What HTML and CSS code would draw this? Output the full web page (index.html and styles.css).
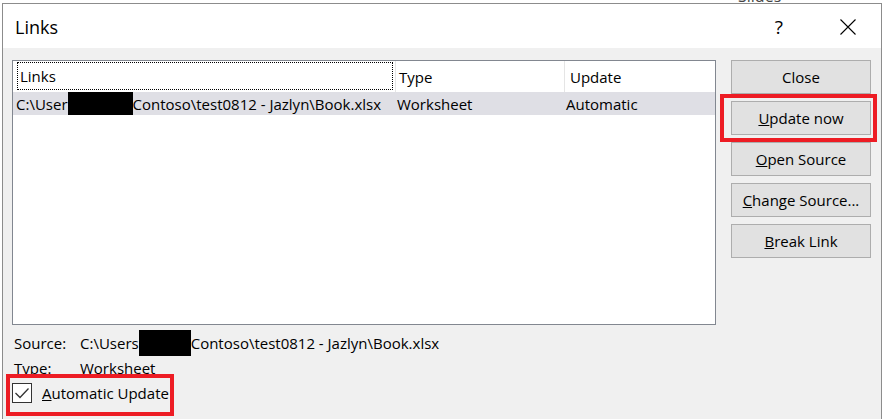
FILE: index.html
```html
<!DOCTYPE html>
<html>
<head>
<meta charset="utf-8">
<link rel="stylesheet" href="styles.css">
</head>
<body>
<div class="screen">
  <div class="behind">Slides</div>
  <div class="dialog">
    <div class="titlebar">
      <span class="title">Links</span>
      <span class="help">?</span>
      <svg class="close" width="16" height="16" viewBox="0 0 16 16"><path d="M0.5 0.5 L15.5 15.5 M15.5 0.5 L0.5 15.5" stroke="#000" stroke-width="1.1" fill="none"/></svg>
    </div>
    <div class="body">
      <div class="left">
        <div class="listbox">
          <div class="hdr">
            <div class="col c1"><span class="focus">Links</span></div>
            <div class="col c2">Type</div>
            <div class="col c3">Update</div>
          </div>
          <div class="row sel">
            <div class="cell c1">C:\User<span class="redact r1"></span>Contoso\test0812 - Jazlyn\Book.xlsx</div>
            <div class="cell c2">Worksheet</div>
            <div class="cell c3">Automatic</div>
          </div>
        </div>
        <div class="info">
          <div class="line"><span class="lbl">Source:</span><span class="val">C:\Users<span class="redact r2"></span>Contoso\test0812 - Jazlyn\Book.xlsx</span></div>
          <div class="line"><span class="lbl">Type:</span><span class="val">Worksheet</span></div>
        </div>
        <div class="auto highlight-auto">
          <span class="check"><svg width="18" height="18" viewBox="0 0 18 18"><path d="M2.5 9 L7 13.5 L15.5 4.5" stroke="#333" stroke-width="1.3" fill="none"/></svg></span>
          <span class="auto-text"><u>A</u>utomatic Update</span>
        </div>
      </div>
      <div class="buttons">
        <button class="btn">Close</button>
        <button class="btn highlight-btn"><u>U</u>pdate now</button>
        <button class="btn"><u>O</u>pen Source</button>
        <button class="btn"><u>C</u>hange Source...</button>
        <button class="btn"><u>B</u>reak Link</button>
      </div>
    </div>
  </div>
</div>
</body>
</html>
```
FILE: styles.css
```css
*, *::before, *::after { box-sizing: border-box; }
html, body { margin: 0; padding: 0; }
body {
  background: #fff;
  font-family: "Open Sans", "Noto Sans", sans-serif;
  font-size: 15px;
  color: #000;
  width: 884px;
  height: 419px;
  overflow: hidden;
}
.screen {
  position: relative;
  height: 419px;
  padding: 3px 2px 0 2px;
  overflow: hidden;
}
.behind {
  position: absolute;
  left: 738px;
  top: -15px;
  font-size: 16px;
  color: #444;
}
.dialog {
  position: relative;
  width: 880px;
  height: 420px;
  border: 1px solid #8c8c8c;
  border-bottom: none;
  background: #f0f0f0;
}
.titlebar {
  height: 44px;
  background: #fff;
  display: flex;
  align-items: center;
  padding: 0 25px 0 12px;
}
.title {
  font-size: 18px;
  line-height: 24px;
  margin-top: 1px;
}
.help {
  margin-left: auto;
  font-size: 19px;
  line-height: 24px;
  margin-right: 57px;
  margin-top: 1px;
}
.close { display: block; margin-top: 2px; }
.body {
  display: flex;
  gap: 15px;
  padding: 12px 10px 0 9px;
}
.left {
  width: 704px;
  display: flex;
  flex-direction: column;
  align-items: flex-start;
}
.listbox {
  width: 704px;
  height: 265px;
  border: 1px solid #828790;
  background: #fff;
}
.hdr {
  display: flex;
  height: 31px;
}
.hdr .col {
  height: 31px;
  display: flex;
  align-items: center;
  border-right: 1px solid #e5e5e5;
}
.hdr .c1 { width: 383px; padding-left: 4px; }
.hdr .c2 { width: 169px; padding-left: 3px; }
.hdr .c3 { flex: 1; padding-left: 5px; border-right: none; }
.focus {
  display: flex;
  align-items: center;
  width: 376px;
  height: 28px;
  margin-top: 1px;
  margin-bottom: 2px;
  padding-left: 2px;
  border: 1px dotted #000;
}
.row {
  display: flex;
  height: 23px;
  align-items: center;
}
.row.sel { background: #dfdfe5; }
.row .c1 { width: 383px; padding-left: 3px; display: flex; align-items: center; white-space: nowrap; }
.row .c2 { width: 169px; padding-left: 1px; }
.row .c3 { flex: 1; padding-left: 1px; }
.redact {
  display: inline-block;
  background: #000;
  flex: none;
}
.r1 { width: 65px; height: 23px; }
.r2 { width: 52px; height: 26px; }
.info {
  margin-top: 5px;
  padding-left: 2px;
}
.line {
  display: flex;
  align-items: center;
  height: 25px;
}
.lbl { width: 66px; }
.val { display: flex; align-items: center; height: 25px; white-space: nowrap; }
.auto {
  position: relative;
  display: flex;
  align-items: center;
  height: 20px;
  margin-top: 3px;
}
.check {
  width: 20px;
  height: 20px;
  border: 1px solid #333;
  background: #fff;
  display: flex;
}
.auto-text { margin-left: 10px; line-height: 20px; }
.highlight-auto::after {
  content: "";
  position: absolute;
  left: -6px;
  top: -9px;
  width: 168px;
  height: 42px;
  border: 4px solid #ed1c24;
}
.buttons {
  width: 140px;
  display: flex;
  flex-direction: column;
  gap: 7px;
}
.btn {
  position: relative;
  height: 34px;
  background: #e1e1e1;
  border: 1px solid #adadad;
  font-family: inherit;
  font-size: 15px;
  color: #000;
  padding: 0;
}
.highlight-btn::after {
  content: "";
  position: absolute;
  left: -12px;
  top: -8px;
  width: 157px;
  height: 48px;
  border: 4px solid #ed1c24;
}
```
